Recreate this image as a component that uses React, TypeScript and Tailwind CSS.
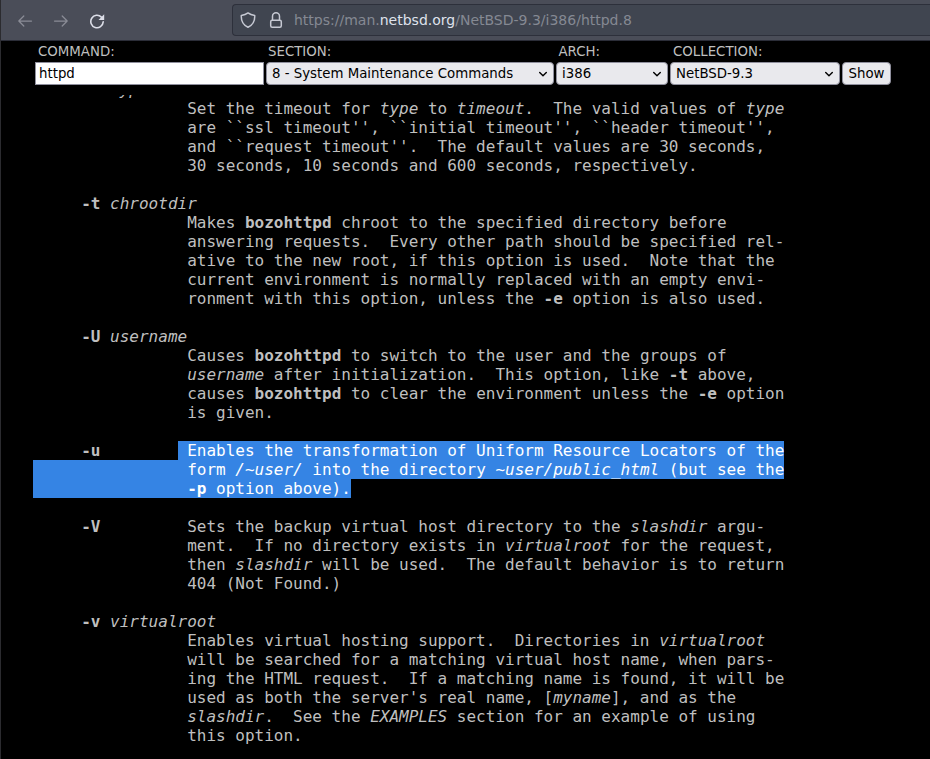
import type { ReactNode } from 'react';

const B = ({ children }: { children: ReactNode }) => <b className="font-bold">{children}</b>;
const I = ({ children }: { children: ReactNode }) => <i className="italic">{children}</i>;

const IND = ' '.repeat(16);
const OPT = ' '.repeat(5);

const Selected = ({ children }: { children: ReactNode }) => (
  <span className="inline-block h-[19px] bg-[#3584e4] align-top text-white">{children}</span>
);

const lines: ReactNode[] = [
  <>{OPT}<B>-T</B> <I>type timeout</I></>,
  <>{IND}Set the timeout for <I>type</I> to <I>timeout</I>.  The valid values of <I>type</I></>,
  <>{IND}{"are ``ssl timeout'', ``initial timeout'', ``header timeout'',"}</>,
  <>{IND}{"and ``request timeout''.  The default values are 30 seconds,"}</>,
  <>{IND}30 seconds, 10 seconds and 600 seconds, respectively.</>,
  null,
  <>{OPT}<B>-t</B> <I>chrootdir</I></>,
  <>{IND}Makes <B>bozohttpd</B> chroot to the specified directory before</>,
  <>{IND}answering requests.  Every other path should be specified rel-</>,
  <>{IND}ative to the new root, if this option is used.  Note that the</>,
  <>{IND}current environment is normally replaced with an empty envi-</>,
  <>{IND}ronment with this option, unless the <B>-e</B> option is also used.</>,
  null,
  <>{OPT}<B>-U</B> <I>username</I></>,
  <>{IND}Causes <B>bozohttpd</B> to switch to the user and the groups of</>,
  <>{IND}<I>username</I> after initialization.  This option, like <B>-t</B> above,</>,
  <>{IND}causes <B>bozohttpd</B> to clear the environment unless the <B>-e</B> option</>,
  <>{IND}is given.</>,
  null,
  <>{OPT}<B>-u</B>{' '.repeat(8)}<Selected> Enables the transformation of Uniform Resource Locators of the</Selected></>,
  <Selected>{IND}form <I>/~user/</I> into the directory <I>~user/public_html</I> (but see the</Selected>,
  <Selected>{IND}<B>-p</B> option above).</Selected>,
  null,
  <>{OPT}<B>-V</B>{' '.repeat(9)}Sets the backup virtual host directory to the <I>slashdir</I> argu-</>,
  <>{IND}ment.  If no directory exists in <I>virtualroot</I> for the request,</>,
  <>{IND}then <I>slashdir</I> will be used.  The default behavior is to return</>,
  <>{IND}404 (Not Found.)</>,
  null,
  <>{OPT}<B>-v</B> <I>virtualroot</I></>,
  <>{IND}Enables virtual hosting support.  Directories in <I>virtualroot</I></>,
  <>{IND}will be searched for a matching virtual host name, when pars-</>,
  <>{IND}ing the HTML request.  If a matching name is found, it will be</>,
  <>{IND}used as both the server's real name, [<I>myname</I>], and as the</>,
  <>{IND}<I>slashdir</I>.  See the <I>EXAMPLES</I> section for an example of using</>,
  <>{IND}this option.</>,
];

function Field({ label, labelClass = 'pl-[3px]', children }: { label: string; labelClass?: string; children: ReactNode }) {
  return (
    <label className="flex flex-col">
      <span className={`h-[21px] text-[13.333px] leading-[21px] text-[#bfbfbf] ${labelClass}`}>{label}</span>
      {children}
    </label>
  );
}

function Select({ value, className }: { value: string; className: string }) {
  return (
    <span className={`flex h-[23px] items-center justify-between rounded-[4px] border border-[#8f8f9d] bg-[#e9e9ed] pl-[5px] pr-[5px] text-[13.333px] leading-none text-black ${className}`}>
      {value}
      <svg width="10" height="10" viewBox="0 0 10 10" fill="none" stroke="#000" strokeWidth="1.4" strokeLinecap="round" strokeLinejoin="round" className="mt-px">
        <path d="M1.7 3.5 5 6.8l3.300-3.300" />
      </svg>
    </span>
  );
}

const svgProps = { width: 16, height: 16, viewBox: '0 0 16 16', fill: 'none', strokeWidth: 1.25, strokeLinecap: 'round', strokeLinejoin: 'round' } as const;

export default function App() {
  return (
    <div className="flex h-[759px] w-[930px] flex-col overflow-hidden border-l border-[#2b2b2f] bg-black font-['DejaVu_Sans',sans-serif]">
      <header className="flex h-[41px] shrink-0 items-start border-b border-[#2b2d38] bg-[#4a4d58]">
        <div className="flex h-[41px] w-[231px] items-center gap-[20px] pl-[16px]">
          <svg {...svgProps} stroke="#8a8c96">
            <path d="M1.800 8h12.700M6.800 3 1.800 8l5 5" />
          </svg>
          <svg {...svgProps} stroke="#8a8c96">
            <path d="M14.200 8H1.500M9.200 3l5 5-5 5" />
          </svg>
          <svg {...svgProps} stroke="#dcdee8" strokeWidth={1.6}>
            <path d="M12.400 4.100A6.200 6.200 0 1 0 14.200 8.900" />
            <path d="M15.200 1.300v5.700H9.500z" fill="#dcdee8" stroke="none" />
          </svg>
        </div>
        <div className="mt-[4px] flex h-[32px] flex-1 items-center rounded-l-[4px] border border-r-0 border-[#2d303b] bg-[#404550] pl-[7px]">
          <svg {...svgProps} stroke="#c6c9d3" strokeWidth={1.5}>
            <path d="M8 .9C6.200 2.200 4 3 1.300 3.400c-.3 5 1.600 9.600 6.700 11.800 5.100-2.200 7-6.800 6.700-11.800C12 3 9.800 2.200 8 .9z" />
          </svg>
          <svg {...svgProps} stroke="#c6c9d3" strokeWidth={1.5} className="ml-[12px]">
            <rect x="2.700" y="8.300" width="10.600" height="6.900" rx="1.500" />
            <path d="M4.500 8.300V4.300a3.500 3.500 0 0 1 7 0v4" />
          </svg>
          <span className="ml-[10px] whitespace-nowrap text-[14px] leading-[20px] text-[#858993]">
            https://man.<span className="text-[#dfe2ec]">netbsd.org</span>/NetBSD-9.3/i386/httpd.8
          </span>
        </div>
      </header>

      <form className="flex h-[54px] shrink-0 items-start pl-[34px]">
        <Field label="COMMAND:">
          <span className="mr-[2px] flex h-[23px] w-[229px] items-center border border-[#8f8f9d] bg-white pl-[3px] text-[13.333px] leading-none text-black">httpd</span>
        </Field>
        <Field label="SECTION:" labelClass="pl-[2px]">
          <Select value="8 - System Maintenance Commands" className="mr-[2px] w-[288px]" />
        </Field>
        <Field label="ARCH:" labelClass="pl-[2.500px]">
          <Select value="i386" className="mr-[2px] w-[112px]" />
        </Field>
        <Field label="COLLECTION:">
          <Select value="NetBSD-9.3" className="mr-[2px] w-[170px]" />
        </Field>
        <button type="button" className="mt-[21px] flex h-[23px] w-[49px] items-center justify-center rounded-[4px] border border-[#8f8f9d] bg-[#e9e9ed] text-[13.333px] leading-none text-black">
          Show
        </button>
      </form>

      <main className="min-h-0 flex-1 overflow-hidden pl-[32px]">
        <div className="-mt-[15px] font-['DejaVu_Sans_Mono',monospace] text-[16px] leading-[19px] text-[#bfbfbf]">
          {lines.map((line, i) => (
            <div key={i} className="h-[19px] whitespace-pre">{line}</div>
          ))}
        </div>
      </main>
    </div>
  );
}
